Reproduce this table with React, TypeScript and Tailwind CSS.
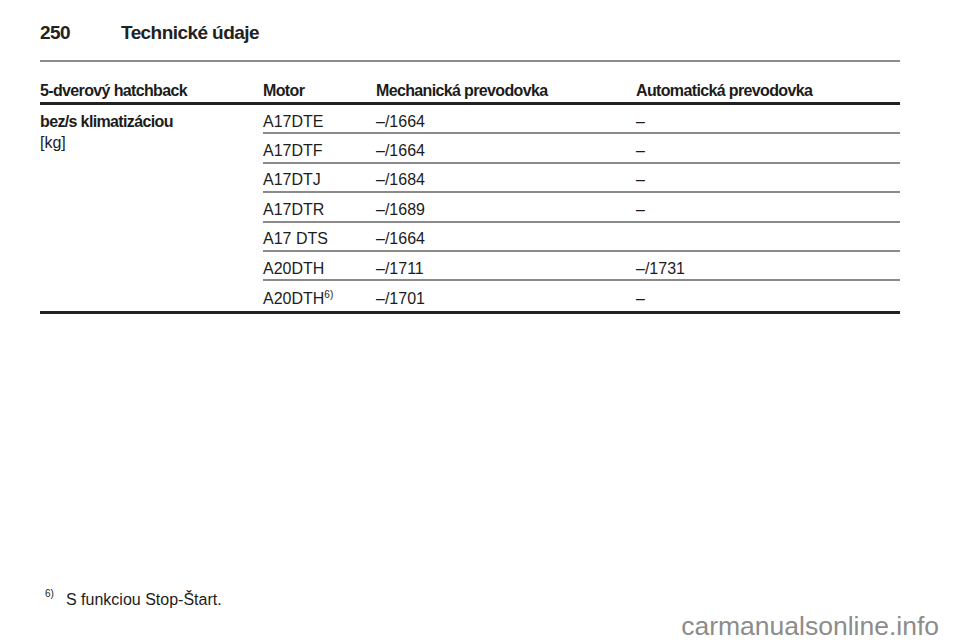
import React from "react";

type Row = { motor: string; note?: string; manual: string; auto: string };

const ROWS: Row[] = [
  { motor: "A17DTE", manual: "–/1664", auto: "–" },
  { motor: "A17DTF", manual: "–/1664", auto: "–" },
  { motor: "A17DTJ", manual: "–/1684", auto: "–" },
  { motor: "A17DTR", manual: "–/1689", auto: "–" },
  { motor: "A17 DTS", manual: "–/1664", auto: "" },
  { motor: "A20DTH", manual: "–/1711", auto: "–/1731" },
  { motor: "A20DTH", note: "6)", manual: "–/1701", auto: "–" },
];

export default function App() {
  return (
    <div className="h-[642px] w-[960px] bg-white text-[#1c1c1c] font-['Liberation_Sans',Arial,sans-serif] overflow-hidden">
      <div className="ml-[40px] w-[860px]">
        {/* page title */}
        <div className="pt-[22px] flex text-[19px] leading-[22px] font-bold tracking-[-0.03em] text-[#222]">
          <span className="w-[81px]">250</span>
          <span>Technické údaje</span>
        </div>
        <div className="mt-[16px] h-[2px] bg-[#8c8c8c]" />

        {/* table */}
        <div>
          <div className="flex pt-[20px] pb-[2px] border-b-[3px] border-[#222] text-[16px] leading-[18px] font-bold tracking-[-0.04em]">
            <div className="w-[223px]">5-dverový hatchback</div>
            <div className="w-[113px]">Motor</div>
            <div className="w-[260px]">Mechanická prevodovka</div>
            <div className="flex-1">Automatická prevodovka</div>
          </div>

          <div className="flex border-b-[3px] border-[#222] text-[16px]">
            <div className="w-[223px] pt-[6px] leading-[21px]">
              <div className="font-bold tracking-[-0.04em]">bez/s klimatizáciou</div>
              <div>[kg]</div>
            </div>
            <div className="flex-1">
              {ROWS.map((r, i) => (
                <div
                  key={i}
                  className={`flex items-center h-[29.4px] pt-[6px] leading-[18px] ${
                    i < ROWS.length - 1 ? "border-b-2 border-[#8a8a8a]" : ""
                  }`}
                >
                  <div className="w-[113px]">
                    {r.motor}
                    {r.note && <sup className="text-[10px] relative -top-[6px]">{r.note}</sup>}
                  </div>
                  <div className="w-[260px]">{r.manual}</div>
                  <div className="flex-1">{r.auto}</div>
                </div>
              ))}
            </div>
          </div>
        </div>

        {/* footnote */}
        <div className="mt-[277px] flex text-[16px] leading-[18px]">
          <span className="w-[26px] pl-[5px] text-[10px] leading-[10px] -mt-[2px]">6)</span>
          <span>S funkciou Stop-Štart.</span>
        </div>
      </div>

      <div className="mt-[2px] flex justify-end pr-[21px] text-[26.5px] leading-[30px] text-[#8c8c8c]">
        carmanualsonline.info
      </div>
    </div>
  );
}
